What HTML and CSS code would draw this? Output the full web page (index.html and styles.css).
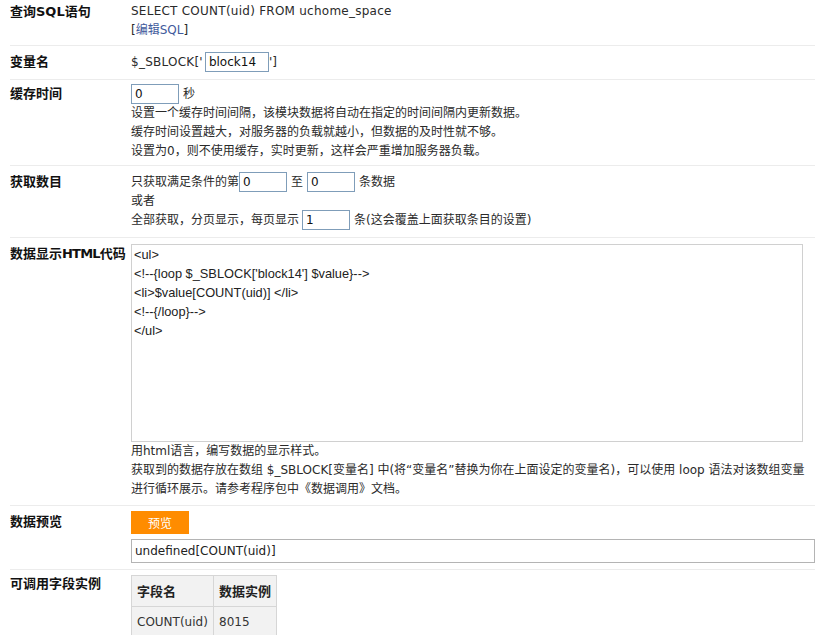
FILE: index.html
```html
<!DOCTYPE html>
<html lang="zh-CN">
<head>
<meta charset="utf-8">
<title>数据调用</title>
<link rel="stylesheet" href="styles.css">
</head>
<body>
<div class="form">
  <div class="row r1">
    <div class="label">查询SQL语句</div>
    <div class="content">
      <div class="line"><span class="en">SELECT COUNT(uid) FROM uchome_space</span></div>
      <div class="line">[<a class="link" href="#">编辑SQL</a>]</div>
    </div>
  </div>

  <div class="row r2">
    <div class="label">变量名</div>
    <div class="content">
      <div class="iline"><span class="en">$_SBLOCK['</span><input class="inp wide" type="text" value="block14"><span>']</span></div>
    </div>
  </div>

  <div class="row r3">
    <div class="label">缓存时间</div>
    <div class="content">
      <div class="iline"><input class="inp" type="text" value="0"><span class="after">秒</span></div>
      <div class="line">设置一个缓存时间间隔，该模块数据将自动在指定的时间间隔内更新数据。</div>
      <div class="line">缓存时间设置越大，对服务器的负载就越小，但数据的及时性就不够。</div>
      <div class="line">设置为0，则不使用缓存，实时更新，这样会严重增加服务器负载。</div>
    </div>
  </div>

  <div class="row r4">
    <div class="label">获取数目</div>
    <div class="content">
      <div class="iline"><span>只获取满足条件的第</span><input class="inp" type="text" value="0"><span class="mid">至</span><input class="inp" type="text" value="0"><span class="after">条数据</span></div>
      <div class="line short">或者</div>
      <div class="iline"><span>全部获取，分页显示，每页显示</span><input class="inp gap" type="text" value="1"><span class="after">条(这会覆盖上面获取条目的设置)</span></div>
    </div>
  </div>

  <div class="row r5">
    <div class="label">数据显示<span class="tight">HTML</span>代码</div>
    <div class="content">
      <textarea class="code">&lt;ul&gt;
&lt;!--{loop $_SBLOCK['block14'] $value}--&gt;
&lt;li&gt;$value[COUNT(uid)] &lt;/li&gt;
&lt;!--{/loop}--&gt;
&lt;/ul&gt;</textarea>
      <div class="line">用html语言，编写数据的显示样式。</div>
      <div class="line nowrap">获取到的数据存放在数组 $_SBLOCK[变量名] 中(将“变量名”替换为你在上面设定的变量名)，可以使用 loop 语法对该数组变量</div>
      <div class="line">进行循环展示。请参考程序包中《数据调用》文档。</div>
    </div>
  </div>

  <div class="row r6">
    <div class="label">数据预览</div>
    <div class="content">
      <button class="btn" type="button">预览</button>
      <input class="preview" type="text" value="undefined[COUNT(uid)]">
    </div>
  </div>

  <div class="row r7">
    <div class="label">可调用字段实例</div>
    <div class="content">
      <table class="fields">
        <tr><th>字段名</th><th>数据实例</th></tr>
        <tr><td>COUNT(uid)</td><td>8015</td></tr>
      </table>
    </div>
  </div>
</div>
</body>
</html>
```

FILE: styles.css
```css
html, body {
  margin: 0;
  padding: 0;
  background: #fff;
}
body {
  font-family: "DejaVu Sans", "Noto Sans CJK SC", sans-serif;
  font-size: 12px;
  line-height: 19px;
  color: #2a2a2a;
}
.form {
  margin: 0 9px 0 10px;
}
.row {
  display: grid;
  grid-template-columns: 121px 1fr;
  border-bottom: 1px solid #ececec;
}
.label {
  font-weight: bold;
  font-size: 13px;
  color: #111;
  line-height: 19px;
  white-space: nowrap;
}
.tight {
  letter-spacing: -0.8px;
}
.content {
  min-width: 0;
}
.en {
  letter-spacing: 0.25px;
}
.line {
  line-height: 19px;
  height: 19px;
}
.line.short {
  height: 18px;
  line-height: 18px;
}
.nowrap {
  white-space: nowrap;
}
.iline {
  display: flex;
  align-items: center;
  height: 20px;
  white-space: nowrap;
}
.link {
  color: #3f5a9c;
  text-decoration: none;
}
.inp {
  box-sizing: border-box;
  width: 48px;
  height: 20px;
  margin: 0;
  padding: 0 3px;
  border: 1px solid #7f9db9;
  background: #fff;
  font-family: "DejaVu Sans", sans-serif;
  font-size: 12px;
  color: #111;
  outline: none;
}
.inp.wide {
  width: 64px;
  margin-left: 2px;
}
.inp.gap {
  margin-left: 3px;
}
.after {
  margin-left: 4px;
}
.mid {
  margin: 0 4px;
}

/* row paddings */
.r1 .label, .r1 .content { padding-top: 2px; }
.r1 .content { padding-bottom: 5px; }
.r2 .label, .r2 .content { padding-top: 6px; }
.r2 .label { line-height: 20px; }
.r2 .content { padding-bottom: 7px; }
.r3 .label, .r3 .content { padding-top: 4px; }
.r3 .label { line-height: 20px; }
.r3 .content { padding-bottom: 4px; }
.r4 .label, .r4 .content { padding-top: 6px; }
.r4 .label { line-height: 20px; }
.r4 .content { padding-bottom: 7px; }
.r5 .label, .r5 .content { padding-top: 6px; }
.r5 .content { padding-bottom: 6px; }
.r6 .label, .r6 .content { padding-top: 5px; }
.r6 .label { line-height: 22px; }
.r6 .content { padding-bottom: 6px; }
.r7 .label { padding-top: 4px; }
.r7 .content { padding-top: 5px; }

.code {
  display: block;
  box-sizing: border-box;
  width: 672px;
  height: 198px;
  margin: 0;
  padding: 0 2px;
  border: 1px solid #d0d0d0;
  resize: none;
  font-family: "Liberation Sans", "Noto Sans CJK SC", sans-serif;
  font-size: 12.8px;
  line-height: 19px;
  color: #222;
  background: #fff;
  overflow: hidden;
  outline: none;
}
.btn {
  display: block;
  box-sizing: border-box;
  width: 58px;
  height: 23px;
  margin: 0 0 5px 0;
  padding: 0;
  border: none;
  background: #ff8c00;
  color: #fff;
  font-family: "Noto Sans CJK SC", sans-serif;
  font-size: 12px;
  line-height: 23px;
  text-align: center;
}
.preview {
  display: block;
  box-sizing: border-box;
  width: 684px;
  height: 24px;
  margin: 0;
  padding: 0 3px;
  border: 1px solid #b4b4b4;
  background: #fff;
  font-family: "DejaVu Sans", sans-serif;
  font-size: 12px;
  color: #222;
  outline: none;
}
.fields {
  border-collapse: collapse;
  background: #f2f2f2;
}
.fields th, .fields td {
  border: 1px solid #d6d6d6;
  height: 30px;
  padding: 0 5px;
  text-align: left;
  font-size: 12px;
  color: #333;
  white-space: nowrap;
}
.fields th {
  font-weight: bold;
  font-size: 13px;
  color: #222;
}
.fields th:first-child, .fields td:first-child {
  width: 71px;
}
.fields th:last-child, .fields td:last-child {
  width: 50px;
}
```
